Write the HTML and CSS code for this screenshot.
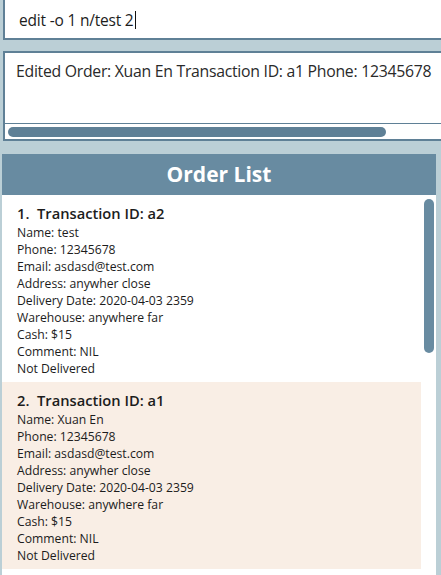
FILE: index.html
```html
<!DOCTYPE html>
<html>
<head>
<meta charset="utf-8">
<link rel="stylesheet" href="styles.css">
</head>
<body>
<div class="app">
  <div class="command">
    <span class="command-text">edit -o 1 n/test 2</span><span class="caret"></span>
  </div>
  <div class="result">
    <div class="result-text">Edited Order: Xuan En Transaction ID: a1 Phone: 12345678</div>
    <div class="hscroll"><div class="hthumb"></div></div>
  </div>
  <div class="panel">
    <div class="panel-header">Order List</div>
    <div class="list">
      <div class="card">
        <div class="card-title"><span class="idx">1.</span>Transaction ID: a2</div>
        <div class="line">Name: test</div>
        <div class="line">Phone: 12345678</div>
        <div class="line">Email: asdasd@test.com</div>
        <div class="line">Address: anywher close</div>
        <div class="line">Delivery Date: 2020-04-03 2359</div>
        <div class="line">Warehouse: anywhere far</div>
        <div class="line">Cash: $15</div>
        <div class="line">Comment: NIL</div>
        <div class="line">Not Delivered</div>
      </div>
      <div class="card alt">
        <div class="card-title"><span class="idx">2.</span>Transaction ID: a1</div>
        <div class="line">Name: Xuan En</div>
        <div class="line">Phone: 12345678</div>
        <div class="line">Email: asdasd@test.com</div>
        <div class="line">Address: anywher close</div>
        <div class="line">Delivery Date: 2020-04-03 2359</div>
        <div class="line">Warehouse: anywhere far</div>
        <div class="line">Cash: $15</div>
        <div class="line">Comment: NIL</div>
        <div class="line">Not Delivered</div>
      </div>
      <div class="vthumb"></div>
    </div>
  </div>
</div>
</body>
</html>
```

FILE: styles.css
```css
html, body {
  margin: 0;
  padding: 0;
  background: #bbcfd6;
  overflow: hidden;
  width: 441px;
  height: 575px;
}
.app {
  font-family: "Open Sans", "Noto Sans", sans-serif;
  color: #1c1c1c;
  display: flex;
  flex-direction: column;
}
.command {
  margin-top: -2px;
  margin-left: 3px;
  width: 480px;
  height: 42px;
  box-sizing: border-box;
  border: 2px solid #5f8096;
  background: #fff;
  display: flex;
  align-items: center;
  padding-left: 14px;
  padding-top: 2px;
  font-size: 15.5px;
}
.command-text {
  white-space: nowrap;
  letter-spacing: -0.2px;
}
.caret {
  display: inline-block;
  width: 1px;
  height: 18px;
  background: #111;
  margin-left: 1px;
}
.result {
  margin-top: 11px;
  margin-left: 3px;
  width: 480px;
  height: 90px;
  box-sizing: border-box;
  border: 2px solid #5f8096;
  background: #fff;
  display: flex;
  flex-direction: column;
}
.result-text {
  height: 71px;
  border-bottom: 1px solid #5f8096;
  padding: 7px 0 0 11px;
  box-sizing: border-box;
  font-size: 15.8px;
  white-space: nowrap;
  letter-spacing: -0.28px;
  color: #2a2a2a;
}
.hscroll {
  flex: 1;
  padding: 3px 0 0 3px;
}
.hthumb {
  width: 378px;
  height: 10px;
  border-radius: 5px;
  background: #5f8096;
}
.panel {
  margin-top: 13px;
  margin-left: 2px;
  width: 434px;
}
.panel-header {
  height: 41px;
  background: #688ba1;
  color: #fff;
  font-weight: 700;
  font-size: 21px;
  display: flex;
  align-items: center;
  justify-content: center;
  padding-bottom: 1px;
  box-sizing: border-box;
}
.list {
  position: relative;
  background: #fff;
  height: 400px;
}
.card {
  width: 419px;
  box-sizing: border-box;
  padding: 9px 0 5px 15px;
  height: 187px;
}
.card.alt {
  background: #f9eee5;
}
.card-title {
  font-size: 14.7px;
  font-weight: 600;
  line-height: 18px;
  margin-bottom: 2px;
  white-space: nowrap;
}
.idx {
  display: inline-block;
  width: 20px;
}
.line {
  font-size: 12.2px;
  line-height: 17px;
  white-space: nowrap;
}
.vthumb {
  position: absolute;
  left: 422px;
  top: 4px;
  width: 10px;
  height: 154px;
  border-radius: 5px;
  background: #688ba1;
}
```
